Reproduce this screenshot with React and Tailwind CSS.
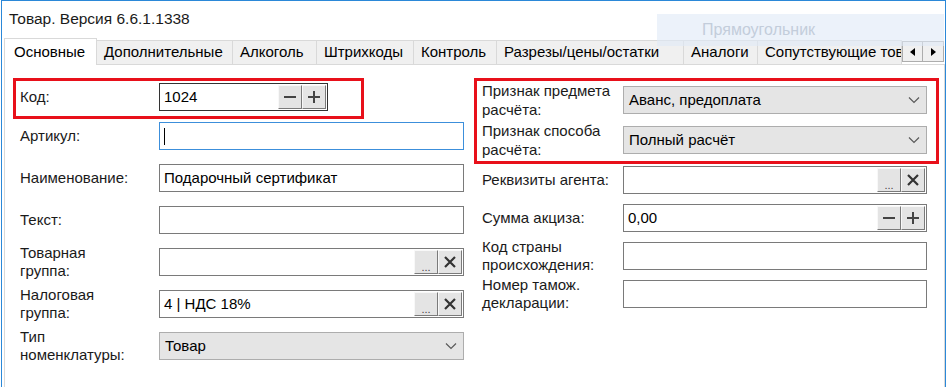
import React from 'react';

const font = { fontFamily: '"Liberation Sans", Arial, sans-serif' };

const tabs = [
  { label: 'Основные', w: 'w-[93px]', active: true },
  { label: 'Дополнительные', w: 'w-[136px]' },
  { label: 'Алкоголь', w: 'w-[84px]' },
  { label: 'Штрихкоды', w: 'w-[97px]' },
  { label: 'Контроль', w: 'w-[83px]' },
  { label: 'Разрезы/цены/остатки', w: 'w-[187px]' },
  { label: 'Аналоги', w: 'w-[74px]' },
  { label: 'Сопутствующие товары', w: 'w-[144px]' },
];

const Chevron = () => (
  <svg width="12" height="8" viewBox="0 0 12 8" className="mr-[6px]">
    <polyline points="1,1.5 6,6.5 11,1.5" fill="none" stroke="#5a5a5a" strokeWidth="1.2" />
  </svg>
);

const SmallBtn = ({ children }) => (
  <div className="w-[24px] h-[24px] flex items-center justify-center bg-[#e4e4e4] border border-t-[#f8f8f8] border-l-[#f8f8f8] border-r-[#7a7a7a] border-b-[#7a7a7a]">
    {children}
  </div>
);

const DotsBtn = () => (
  <SmallBtn>
    <span className="text-[11px] leading-none text-[#444] mt-[10px]">...</span>
  </SmallBtn>
);

const ClearBtn = () => (
  <SmallBtn>
    <svg width="14" height="14" viewBox="0 0 14 14">
      <path d="M2 2 L12 12 M12 2 L2 12" stroke="#333" strokeWidth="2.2" />
    </svg>
  </SmallBtn>
);

const MinusBtn = () => (
  <SmallBtn>
    <svg width="16" height="16" viewBox="0 0 16 16">
      <path d="M2 8 H14" stroke="#444" strokeWidth="2" />
    </svg>
  </SmallBtn>
);

const PlusBtn = () => (
  <SmallBtn>
    <svg width="16" height="16" viewBox="0 0 16 16">
      <path d="M2 8 H14 M8 2 V14" stroke="#444" strokeWidth="2" />
    </svg>
  </SmallBtn>
);

const Field = ({ value, kind, border = 'border-[#7a7a7a]', className = '' }) => {
  if (kind === 'combo') {
    return (
      <div className={`h-[28px] flex items-center justify-between bg-[#e5e5e5] border border-[#adadad] pl-[5px] ${className}`}>
        <span>{value}</span>
        <Chevron />
      </div>
    );
  }
  return (
    <div className={`h-[28px] flex items-center bg-white border ${border} pl-[4px] pr-[1px] ${className}`}>
      <span className="flex-1">{value}</span>
      {kind === 'ref' && (
        <div className="flex">
          <DotsBtn />
          <ClearBtn />
        </div>
      )}
      {kind === 'spin' && (
        <div className="flex">
          <MinusBtn />
          <PlusBtn />
        </div>
      )}
    </div>
  );
};

const Row = ({ label, labelW, children, className = '' }) => (
  <div className={`flex items-center ${className}`}>
    <div className={`${labelW} shrink-0 leading-[18px] text-[#1a1a1a]`}>{label}</div>
    <div className="flex-1">{children}</div>
  </div>
);

export default function App() {
  return (
    <div className="w-[949px] h-[387px] bg-white overflow-hidden text-[15px] text-black" style={font}>
      <div className="relative ml-[1px] w-[945px] h-[387px] border-x border-t border-[#2b88d8] flex flex-col">
        {/* title */}
        <div className="h-[36px] shrink-0 flex items-center pl-[7px] text-[15.5px] text-[#1a1a1a]">
          Товар. Версия 6.6.1.1338
        </div>

        {/* overlay label */}
        <div className="absolute left-[655px] top-[13px] w-[287px] h-[32px] bg-[#dfe9f7]/60 flex items-center pl-[45px] text-[16px] text-[#c3cddb] z-10">
          Прямоугольник
        </div>

        {/* tabs */}
        <div className="h-[27px] shrink-0 flex items-end pl-[2px] relative z-0">
          {tabs.map((t) =>
            t.active ? (
              <div
                key={t.label}
                className={`${t.w} shrink-0 h-[27px] bg-white border-x border-t border-[#d9d9d9] flex items-center pl-[9px] -mb-[1px] relative z-10`}
              >
                {t.label}
              </div>
            ) : (
              <div
                key={t.label}
                className={`${t.w} shrink-0 h-[24px] bg-[#f0f0f0] border-t border-r border-[#d9d9d9] flex items-center pl-[7px] overflow-hidden whitespace-nowrap`}
              >
                {t.label}
              </div>
            )
          )}
          <div className="flex mb-[2px]">
            <div className="w-[21px] h-[21px] bg-[#f0f0f0] border border-[#adadad] flex items-center justify-center">
              <svg width="6" height="8" viewBox="0 0 6 8"><path d="M5 0 L0 4 L5 8 Z" fill="#000" /></svg>
            </div>
            <div className="w-[21px] h-[21px] bg-[#f0f0f0] border border-l-0 border-[#adadad] flex items-center justify-center">
              <svg width="6" height="8" viewBox="0 0 6 8"><path d="M1 0 L6 4 L1 8 Z" fill="#000" /></svg>
            </div>
          </div>
        </div>

        {/* panel */}
        <div className="flex-1 ml-[2px] w-[941px] border-x border-t border-[#d9d9d9] flex pt-[13px] pl-[8px]">
          {/* left column */}
          <div className="w-[451px] flex flex-col">
            <div className="w-[351px] border-[3px] border-[#e8101a] pl-[4px] pt-[2px] pb-[5px]">
              <Row label="Код:" labelW="w-[139px]">
                <Field value="1024" kind="spin" border="border-[#333]" className="w-[169px]" />
              </Row>
            </div>
            <div className="flex flex-col gap-[14px] pl-[7px] mt-[3px]">
              <Row label="Артикул:" labelW="w-[139px]">
                <Field value={<span className="inline-block w-[1px] h-[17px] bg-black align-middle" />} border="border-[#3c8fdb]" />
              </Row>
              <Row label="Наименование:" labelW="w-[139px]">
                <Field value="Подарочный сертификат" />
              </Row>
              <Row label="Текст:" labelW="w-[139px]">
                <Field value="" />
              </Row>
              <Row label={<>Товарная<br />группа:</>} labelW="w-[139px]" className="-my-[4px]">
                <Field value="" kind="ref" />
              </Row>
              <Row label={<>Налоговая<br />группа:</>} labelW="w-[139px]" className="-my-[4px]">
                <Field value="4 | НДС 18%" kind="ref" />
              </Row>
              <Row label={<>Тип<br />номенклатуры:</>} labelW="w-[139px]" className="-my-[4px]">
                <Field value="Товар" kind="combo" />
              </Row>
            </div>
          </div>

          {/* right column */}
          <div className="w-[465px] ml-[10px] flex flex-col">
            <div className="border-[3px] border-[#e8101a] pl-[5px] pr-[9px] pt-[5px] pb-[7px] flex flex-col gap-[12px]">
              <Row label={<>Признак предмета<br />расчёта:</>} labelW="w-[141px] leading-[19px]" className="-my-[5px]">
                <Field value="Аванс, предоплата" kind="combo" />
              </Row>
              <Row label={<>Признак способа<br />расчёта:</>} labelW="w-[141px] leading-[19px]" className="-my-[5px]">
                <Field value="Полный расчёт" kind="combo" />
              </Row>
            </div>
            <div className="flex flex-col gap-[10px] pl-[8px] pr-[12px] mt-[2px]">
              <Row label="Реквизиты агента:" labelW="w-[141px]">
                <Field value="" kind="ref" />
              </Row>
              <Row label="Сумма акциза:" labelW="w-[141px]">
                <Field value="0,00" kind="spin" />
              </Row>
              <Row label={<>Код страны<br />происхождения:</>} labelW="w-[141px]" className="-my-[4px]">
                <Field value="" />
              </Row>
              <Row label={<>Номер тамож.<br />декларации:</>} labelW="w-[141px]" className="-my-[4px]">
                <Field value="" />
              </Row>
            </div>
          </div>
        </div>
      </div>
    </div>
  );
}
